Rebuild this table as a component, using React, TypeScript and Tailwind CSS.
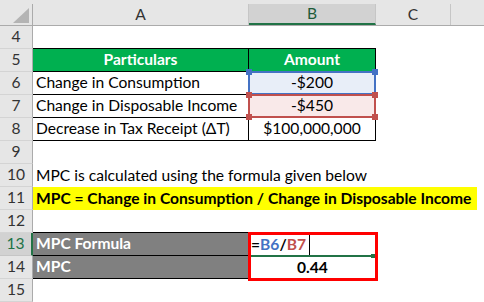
import React from 'react';

const font = { fontFamily: 'Lato, "Open Sans", sans-serif' };

const RowHead = ({ n, active = false }: { n: number; active?: boolean }) => (
  <div
    className={`w-[33px] shrink-0 h-full flex items-center justify-center text-[15.6px] border-r border-b ${
      active
        ? 'bg-[#d2d2d2] text-[#217346] border-r-[#217346] border-r-2 border-b-[#c6c6c6]'
        : 'bg-[#e6e6e6] text-[#333] border-r-[#ababab] border-b-[#d4d4d4]'
    }`}
  >
    {n}
  </div>
);

const Handle = ({ pos, color }: { pos: string; color: string }) => (
  <span className={`absolute w-[6px] h-[6px] ${pos} ${color}`} />
);

const App = () => {
  return (
    <div className="w-[484px] h-[302px] bg-white overflow-hidden text-black" style={font}>
      {/* column headers */}
      <div className="flex h-[26px] bg-[#e6e6e6] border-b border-[#ababab]">
        <div className="w-[33px] shrink-0 relative border-r border-[#ababab] mt-[4px]">
          <svg className="absolute left-[13px] top-[4px]" width="16" height="15" viewBox="0 0 16 15">
            <polygon points="16,0 16,15 0,15" fill="#b4b4b4" />
          </svg>
        </div>
        <div className="w-[216px] shrink-0 mt-[4px] border-r border-[#c6c6c6] flex items-center justify-center text-[15.6px] text-[#333]">
          A
        </div>
        <div className="w-[127px] shrink-0 mt-[4px] bg-[#d2d2d2] border-b-2 border-[#217346] border-r border-r-[#c6c6c6] flex items-center justify-center text-[15.6px] text-[#1e5b3a]">
          B
        </div>
        <div className="w-[75px] shrink-0 mt-[4px] border-r border-[#c6c6c6] flex items-center justify-center text-[15.6px] text-[#333]">
          C
        </div>
        <div className="flex-1 mt-[4px]" />
      </div>

      {/* row 4 */}
      <div className="flex h-[23px]">
        <RowHead n={4} />
        <div className="w-[216px] shrink-0 border-b border-black" />
        <div className="w-[127px] shrink-0 border-b border-black" />
      </div>

      {/* row 5 */}
      <div className="flex h-[23px] text-[15.6px]">
        <RowHead n={5} />
        <div className="w-[216px] shrink-0 bg-[#00b050] border-r border-b border-black flex items-center justify-center font-bold text-white">
          Particulars
        </div>
        <div className="w-[127px] shrink-0 bg-[#00b050] border-r border-b border-black flex items-center justify-center font-bold text-white">
          Amount
        </div>
      </div>

      {/* row 6 */}
      <div className="flex h-[23px] text-[15.6px]">
        <RowHead n={6} />
        <div className="w-[216px] shrink-0 border-r border-b border-black flex items-center px-[3px] whitespace-nowrap">
          Change in Consumption
        </div>
        <div className="w-[127px] shrink-0 relative bg-[#e8eef8] border-r border-b border-black flex items-center justify-center">
          -$200
          <div className="absolute left-[-1px] top-[-1px] right-[-1px] bottom-[-1px] border-2 border-[#4472c4]">
            <Handle pos="left-[-4px] top-[-4px]" color="bg-[#4472c4]" />
            <Handle pos="right-[-4px] top-[-4px]" color="bg-[#4472c4]" />
          </div>
        </div>
      </div>

      {/* row 7 */}
      <div className="flex h-[23px] text-[15.6px]">
        <RowHead n={7} />
        <div className="w-[216px] shrink-0 border-r border-b border-black flex items-center px-[3px] whitespace-nowrap">
          Change in Disposable Income
        </div>
        <div className="w-[127px] shrink-0 relative bg-[#f9e9e9] border-r border-b border-black flex items-center justify-center">
          -$450
          <div className="absolute left-[-1px] top-[-1px] right-[-1px] bottom-[-1px] border-2 border-[#c0504d]">
            <Handle pos="left-[-4px] top-[-4px]" color="bg-[#c0504d]" />
            <Handle pos="right-[-4px] top-[-4px]" color="bg-[#c0504d]" />
            <Handle pos="left-[-4px] bottom-[-4px]" color="bg-[#c0504d]" />
            <Handle pos="right-[-4px] bottom-[-4px]" color="bg-[#c0504d]" />
          </div>
        </div>
      </div>

      {/* row 8 */}
      <div className="flex h-[23px] text-[15.6px]">
        <RowHead n={8} />
        <div className="w-[216px] shrink-0 border-r border-b border-black flex items-center px-[3px] whitespace-nowrap">
          Decrease in Tax Receipt (ΔT)
        </div>
        <div className="w-[127px] shrink-0 border-r border-b border-black flex items-center justify-center">
          $100,000,000
        </div>
      </div>

      {/* row 9 */}
      <div className="flex h-[23px]">
        <RowHead n={9} />
      </div>

      {/* row 10 */}
      <div className="flex h-[23px] text-[15.6px]">
        <RowHead n={10} />
        <div className="flex items-center px-[3px] whitespace-nowrap">
          MPC is calculated using the formula given below
        </div>
      </div>

      {/* row 11 */}
      <div className="flex h-[23px] text-[15.6px]">
        <RowHead n={11} />
        <div className="w-[444px] bg-[#ffff00] flex items-center px-[3px] whitespace-nowrap font-bold">
          MPC = Change in Consumption / Change in Disposable Income
        </div>
      </div>

      {/* row 12 */}
      <div className="flex h-[23px]">
        <RowHead n={12} />
        <div className="w-[216px] shrink-0 border-b border-black" />
        <div className="w-[127px] shrink-0" />
      </div>

      {/* row 13 */}
      <div className="flex h-[23px] text-[15.6px]">
        <RowHead n={13} active />
        <div className="w-[216px] shrink-0 bg-[#808080] border-r border-b border-black flex items-center px-[3px] font-bold text-white">
          MPC Formula
        </div>
        <div className="w-[127px] shrink-0 relative flex items-center pl-[2px] font-bold">
          <span>=</span>
          <span className="text-[#4472c4]">B6</span>
          <span>/</span>
          <span className="text-[#c0504d]">B7</span>
          <span className="ml-[3px] w-px h-[20px] bg-black" />
          <span className="absolute left-[2px] right-[2px] bottom-[-1px] h-[2px] bg-[#217346]" />
          <span className="absolute right-[1px] bottom-[-2px] w-[4px] h-[4px] bg-[#217346]" />
          <div className="absolute left-[-1px] top-[-1px] w-[130px] h-[49px] border-[3px] border-[#ff0000]" />
        </div>
      </div>

      {/* row 14 */}
      <div className="flex h-[23px] text-[15.6px]">
        <RowHead n={14} />
        <div className="w-[216px] shrink-0 bg-[#808080] border-r border-b border-black flex items-center px-[3px] font-bold text-white">
          MPC
        </div>
        <div className="w-[127px] shrink-0 flex items-center justify-center font-bold">0.44</div>
      </div>

      {/* row 15 */}
      <div className="flex h-[23px]">
        <RowHead n={15} />
      </div>
    </div>
  );
};

export default App;
